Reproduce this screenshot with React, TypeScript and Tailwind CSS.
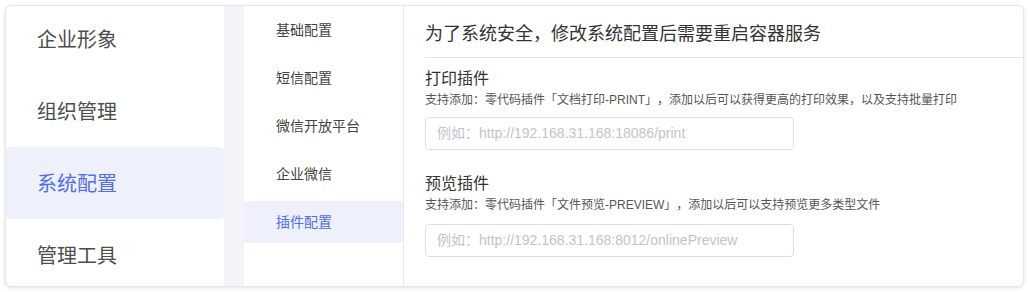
import React from "react";

const FONT = '"Liberation Sans", "Noto Sans CJK SC", sans-serif';

export default function App() {
  const left = ["企业形象", "组织管理", "系统配置", "管理工具"];
  const mid = ["基础配置", "短信配置", "微信开放平台", "企业微信", "插件配置"];
  return (
    <div className="bg-white p-[5px] w-[1028px] h-[292px] [text-spacing-trim:space-all]" style={{ fontFamily: FONT }}>
      <div className="flex h-[282px] w-[1019px] rounded-[6px] border border-[#e6e6e6] bg-white shadow-[0_1px_4px_rgba(0,0,0,0.12)] overflow-hidden">
        <div className="w-[218px] flex flex-col -mt-[3px]">
          {left.map((t, i) => (
            <div
              key={t}
              className={
                "h-[72px] shrink-0 flex items-center pt-[2px] pl-[31px] text-[20px] rounded-[4px] " +
                (i === 2 ? "bg-[#eef1fc] text-[#4f6ef2]" : "text-[#4d4d4d]")
              }
            >
              {t}
            </div>
          ))}
        </div>
        <div className="w-[20px] bg-[#f3f4f8]" />
        <div className="w-[160px] border-r border-[#e8e8e8] flex flex-col">
          {mid.map((t, i) => (
            <div key={t} className="h-[48px] shrink-0 flex items-center">
              <div
                className={
                  "h-[42px] w-full flex items-center pl-[32px] text-[14px] rounded-[4px] " +
                  (i === 4 ? "bg-[#eef1fc] text-[#4f6ef2]" : "text-[#444]")
                }
              >
                {t}
              </div>
            </div>
          ))}
        </div>
        <div className="flex-1 pl-[21px] flex flex-col">
          <div className="h-[52px] shrink-0 pt-[5px] flex items-center border-b border-[#e5e6eb] text-[18px] text-[#333]">
            为了系统安全，修改系统配置后需要重启容器服务
          </div>
          <div className="mt-[9px] text-[16px] leading-[24px] text-[#333]">打印插件</div>
          <div className="text-[12px] leading-[18px] text-[#555]">
            支持添加：零代码插件「文档打印-PRINT」，添加以后可以获得更高的打印效果，以及支持批量打印
          </div>
          <div className="mt-[8px] w-[369px] h-[33px] shrink-0 rounded-[4px] border border-[#dcdfe6] flex items-center pl-[11px] text-[14px] text-[#c0c4cc]">
            例如：http://192.168.31.168:18086/print
          </div>
          <div className="mt-[22px] text-[16px] leading-[24px] text-[#333]">预览插件</div>
          <div className="text-[12px] leading-[18px] text-[#555]">
            支持添加：零代码插件「文件预览-PREVIEW」，添加以后可以支持预览更多类型文件
          </div>
          <div className="mt-[10px] w-[369px] h-[33px] shrink-0 rounded-[4px] border border-[#dcdfe6] flex items-center pl-[11px] text-[14px] text-[#c0c4cc]">
            例如：http://192.168.31.168:8012/onlinePreview
          </div>
        </div>
      </div>
    </div>
  );
}
